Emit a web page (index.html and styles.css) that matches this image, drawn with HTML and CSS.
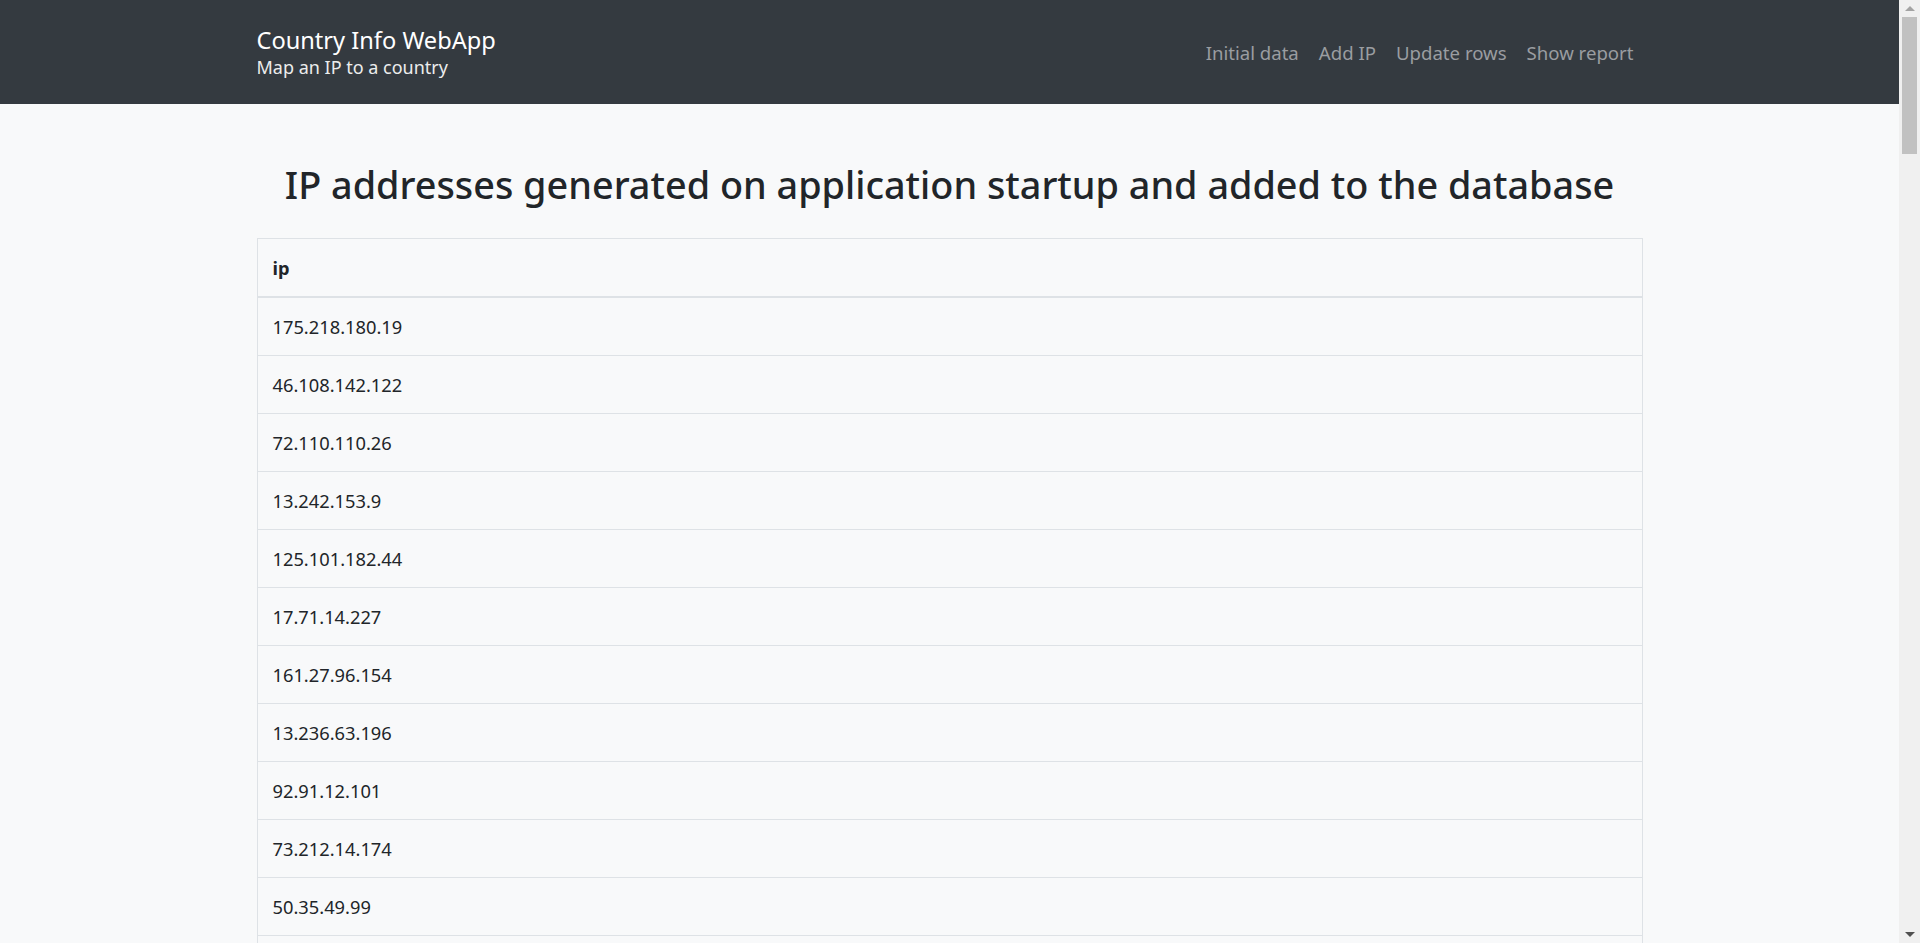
FILE: index.html
```html
<!DOCTYPE html>
<html lang="en">
<head>
<meta charset="utf-8">
<title>Country Info WebApp</title>
<link rel="stylesheet" href="styles.css">
</head>
<body>
<div class="page">
  <header class="navbar">
    <div class="container navbar-inner">
      <div class="brand">
        <div class="brand-title">Country Info WebApp</div>
        <div class="brand-sub">Map an IP to a country</div>
      </div>
      <nav class="nav">
        <a class="nav-link" href="#">Initial data</a>
        <a class="nav-link" href="#">Add IP</a>
        <a class="nav-link" href="#">Update rows</a>
        <a class="nav-link" href="#">Show report</a>
      </nav>
    </div>
  </header>
  <main class="container main">
    <h1 class="title">IP addresses generated on application startup and added to the database</h1>
    <table class="ip-table">
      <thead>
        <tr><th>ip</th></tr>
      </thead>
      <tbody>
        <tr><td>175.218.180.19</td></tr>
        <tr><td>46.108.142.122</td></tr>
        <tr><td>72.110.110.26</td></tr>
        <tr><td>13.242.153.9</td></tr>
        <tr><td>125.101.182.44</td></tr>
        <tr><td>17.71.14.227</td></tr>
        <tr><td>161.27.96.154</td></tr>
        <tr><td>13.236.63.196</td></tr>
        <tr><td>92.91.12.101</td></tr>
        <tr><td>73.212.14.174</td></tr>
        <tr><td>50.35.49.99</td></tr>
        <tr class="spacer-row"><td></td></tr>
      </tbody>
    </table>
  </main>
</div>
<div class="scrollbar">
  <div class="sb-btn sb-up"><span class="tri-up"></span></div>
  <div class="sb-track"><div class="sb-thumb"></div></div>
  <div class="sb-btn sb-down"><span class="tri-down"></span></div>
</div>
</body>
</html>
```
FILE: styles.css
```css
html, body {
  margin: 0;
  padding: 0;
  height: 943px;
  overflow: hidden;
}
body {
  display: flex;
  background: #f8f9fa;
  color: #212529;
  font-family: "Noto Sans", "Open Sans", sans-serif;
}
.page {
  flex: 1;
  min-width: 0;
  height: 943px;
  overflow: hidden;
}
.container {
  width: 1386px;
  margin: 0 auto;
}
.navbar {
  background: #343a40;
  height: 104px;
}
.navbar-inner {
  height: 104px;
  display: flex;
  align-items: center;
  justify-content: space-between;
}
.brand {
  display: flex;
  flex-direction: column;
  gap: 2px;
}
.brand-title {
  color: #ffffff;
  font-size: 23.6px;
  line-height: 28px;
}
.brand-sub {
  color: #eceded;
  font-size: 18px;
  line-height: 22px;
}
.nav {
  display: flex;
  padding-top: 1px;
}
.nav-link {
  color: #9a9da1;
  text-decoration: none;
  font-size: 18.6px;
  line-height: 27px;
  padding: 0 10px;
}
.nav-link:last-child {
  padding-right: 9px;
}
.main {
  padding-top: 58px;
}
.title {
  margin: 0 0 30px 0;
  text-align: center;
  font-size: 37.8px;
  line-height: 46px;
  font-weight: 500;
}
.ip-table {
  width: 100%;
  border-collapse: collapse;
  border: 1px solid #dee2e6;
  font-size: 18.3px;
  line-height: 27px;
}
.ip-table th,
.ip-table td {
  text-align: left;
  padding: 15px 15px 15px 15px;
  border-bottom: 1px solid #dee2e6;
}
.ip-table th {
  font-weight: 700;
  border-bottom: 2px solid #dee2e6;
}
.ip-table .spacer-row td {
  height: 27px;
}
.scrollbar {
  width: 21px;
  flex: none;
  height: 943px;
  background: #f0f0f0;
  display: flex;
  flex-direction: column;
}
.sb-btn {
  height: 17px;
  display: flex;
  align-items: center;
  justify-content: center;
}
.sb-track {
  flex: 1;
  padding: 0 3px;
}
.sb-thumb {
  height: 137px;
  background: #c1c1c1;
}
.tri-up {
  width: 0;
  height: 0;
  border-left: 5px solid transparent;
  border-right: 5px solid transparent;
  border-bottom: 5px solid #a3a3a3;
}
.tri-down {
  width: 0;
  height: 0;
  border-left: 5px solid transparent;
  border-right: 5px solid transparent;
  border-top: 5px solid #505050;
}
```
